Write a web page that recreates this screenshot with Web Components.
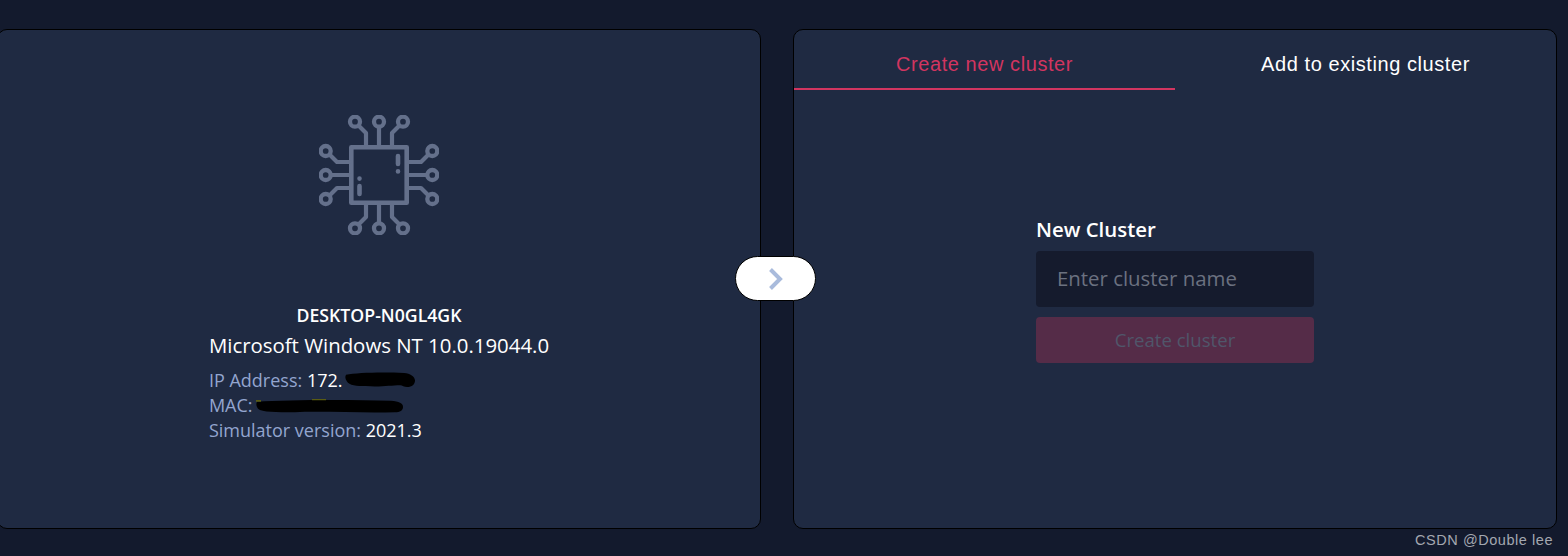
<!DOCTYPE html>
<html lang="en"><head><meta charset="utf-8"><title>Cluster setup</title>
<style>
html,body{margin:0;height:556px;overflow:hidden;background:#131a2d}
</style></head>
<body>
<setup-page>
  <machine-card slot="left" hostname="DESKTOP-N0GL4GK" os="Microsoft Windows NT 10.0.19044.0">
    <info-line label="IP Address:" value="172." mark="ip"></info-line>
    <info-line label="MAC:" value="" mark="mac"></info-line>
    <info-line label="Simulator version:" value="2021.3"></info-line>
  </machine-card>
  <cluster-card slot="right"></cluster-card>
</setup-page>
<script>
function def(name, html){
  customElements.define(name, class extends HTMLElement{
    constructor(){super();this.attachShadow({mode:'open'}).innerHTML=html(this)}
  });
}
def('setup-page',()=>`<style>
:host{display:block;height:556px;position:relative;overflow:hidden;font-family:"Open Sans",sans-serif}
.row{display:flex;gap:32px;margin-left:-3px;padding-top:29px;position:relative;width:1560px}
.pill{position:absolute;left:738px;top:256px;width:81px;height:45px;box-sizing:border-box;border:1px solid #000;border-radius:23px;background:#fff;display:flex;align-items:center;justify-content:center}
.wm{position:absolute;right:15px;top:531px;font:14.5px/18px "Liberation Sans",sans-serif;letter-spacing:.55px;color:#a3a7b0}
</style>
<div class="row"><slot name="left"></slot><slot name="right"></slot>
<div class="pill"><svg width="16" height="24" viewBox="0 0 16 24" fill="none" stroke="#a9bbdc" stroke-width="4"><path d="M2.5 2.5 12 12 2.5 21.5"/></svg></div></div>
<div class="wm">CSDN @Double lee</div>`);
const card=`box-sizing:border-box;width:764px;height:500px;background:#1f2a42;border:1px solid #000;border-radius:10px;`;
def('machine-card',el=>`<style>
:host{display:flex;flex-direction:column;align-items:center;${card}color:#fff}
svg{display:block;margin-top:85px}
.host{margin-top:69px;font-size:17.7px;line-height:22px;font-weight:600}
.box{display:flex;flex-direction:column}
.os{margin-top:4px;font-size:20.4px;line-height:30px}
.lines{margin-top:8px;display:flex;flex-direction:column}
</style>
<svg width="120" height="120" viewBox="0 0 120 120" fill="none" stroke="#64708b" stroke-width="4.2" stroke-linecap="round" stroke-linejoin="round">
<rect x="32.300" y="32.300" width="55.400" height="55.400" stroke-width="4.600"/>
<g stroke-width="4.300"><circle cx="36" cy="6.7" r="5"/><circle cx="60" cy="6.7" r="5"/><circle cx="84" cy="6.7" r="5"/>
<circle cx="36" cy="113.3" r="5"/><circle cx="60" cy="113.3" r="5"/><circle cx="84" cy="113.3" r="5"/>
<circle cx="6.7" cy="36" r="5"/><circle cx="6.7" cy="60" r="5"/><circle cx="6.7" cy="84" r="5"/>
<circle cx="113.3" cy="36" r="5"/><circle cx="113.3" cy="60" r="5"/><circle cx="113.3" cy="84" r="5"/></g>
<path d="M40 11 47 18V31M60 12V31M80 11 73 18V31M40 109 47 102V89M60 108V89M80 109 73 102V89M11 40 18 47H31M12 60H31M11 80 18 73H31M109 40 102 47H89M108 60H89M109 80 102 73H89"/>
<path stroke-width="4.600" d="M79 41V49M79 56.3V56.4M40.5 63.5V63.6M40.5 71V79"/>
</svg>
<div class="host">${el.getAttribute('hostname')}</div>
<div class="box"><div class="os">${el.getAttribute('os')}</div><div class="lines"><slot></slot></div></div>`);
def('info-line',el=>{
const m=el.getAttribute('mark');
const mark=m==='ip'?`<svg class="m" style="left:136px;top:4px" width="71" height="16" viewBox="0 0 72 17" preserveAspectRatio="none"><path fill="#000" d="M1 3C12 .5 38 0 60 1c6 .5 11 4 11 8s-3 7-8 7c-3 0-5-2-7-2-10 0-18 2-35 1C12 15 4 14 2 10 0 7 0 5 1 3Z"/></svg>`
:m==='mac'?`<svg class="m" style="left:47px;top:6px" width="148" height="14" viewBox="0 0 148 16" preserveAspectRatio="none"><path fill="#000" d="M1 3C30 1 90 .5 135 2c8 .5 12 3 12 7s-3 6-8 6c-30 1-70-1-100 0C20 15 6 15 2 11 0 8 0 5 1 3Z"/><path fill="#5a5c12" d="M0 1h5v2H0zM56 0h14v1.500H56z"/></svg>`:'';
return `<style>
:host{display:block;font-size:18px;line-height:25px;color:#93a5cf}
.l{position:relative;white-space:pre}
span{color:#fff}
.m{position:absolute}
</style><div class="l">${el.getAttribute('label')} <span>${el.getAttribute('value')}</span>${mark}</div>`});
def('cluster-card',()=>`<style>
:host{display:flex;flex-direction:column;${card}color:#fff}
.tabs{display:flex;height:60px;font:20px/24px "Liberation Sans",Arial,sans-serif;letter-spacing:.57px}
.tab{flex:1;display:flex;align-items:center;justify-content:center;box-sizing:border-box;border-bottom:2px solid transparent;padding-top:10px}
.on{color:#d23560;border-bottom-color:#d23560}
form{margin:127px auto 0;width:278px;display:flex;flex-direction:column}
label{font-size:20.4px;line-height:24px;font-weight:600;margin-bottom:10px}
input{box-sizing:border-box;height:56px;border:0;border-radius:4px;background:#151b2d;padding:0 21px 2px;font:20.4px "Open Sans",sans-serif;color:#fff;outline:0}
input::placeholder{color:#6b7180;opacity:1}
button{margin-top:10px;height:46px;border:0;border-radius:4px;background:#552c48;color:#50566a;padding:0 0 2px;font:18.6px "Open Sans",sans-serif}
</style>
<div class="tabs"><div class="tab on">Create new cluster</div><div class="tab">Add to existing cluster</div></div>
<form onsubmit="return false"><label for="n">New Cluster</label><input id="n" placeholder="Enter cluster name"><button disabled>Create cluster</button></form>`);
</script>
</body></html>
